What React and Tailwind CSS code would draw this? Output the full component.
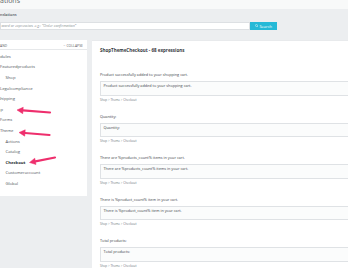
import React from 'react';

const tree = [
  { name: 'Modules', x: '-ml-[6px]' },
  { name: 'Featuredproducts', x: 'ml-0' },
  { name: 'Shop', x: 'ml-[5.5px]' },
  { name: 'Legalcompliance', x: 'ml-0' },
  { name: 'Shipping', x: '-ml-[2px]' },
  { name: 'Shop', x: '-ml-[7px]' },
  { name: 'Forms', x: 'ml-0' },
  { name: 'Theme', x: 'ml-0' },
  { name: 'Actions', x: 'ml-[5.5px]' },
  { name: 'Catalog', x: 'ml-[5.5px]' },
  { name: 'Checkout', x: 'ml-[5.5px]', active: true },
  { name: 'Customeraccount', x: 'ml-[5.5px]' },
  { name: 'Global', x: 'ml-[5.5px]' },
];

const expressions = [
  'Product successfully added to your shopping cart.',
  'Quantity:',
  'There are %products_count% items in your cart.',
  'There is %product_count% item in your cart.',
  'Total products:',
];

// annotation arrows, coords relative to the page
const arrows = [
  { tip: [17, 110], tail: [50, 112.5] },
  { tip: [19, 132.5], tail: [49.5, 135] },
  { tip: [29.5, 162.5], tail: [55, 157.5] },
];

function Arrow({ tip, tail }) {
  const dx = tip[0] - tail[0];
  const dy = tip[1] - tail[1];
  const len = Math.hypot(dx, dy);
  const ux = dx / len, uy = dy / len;
  const bx = tip[0] - ux * 6, by = tip[1] - uy * 6;
  const nx = -uy * 3.2, ny = ux * 3.2;
  return (
    <g fill="#ee2f6d" stroke="#ee2f6d">
      <line x1={tail[0]} y1={tail[1]} x2={bx} y2={by} strokeWidth="2.2" strokeLinecap="round" />
      <polygon points={`${tip[0]},${tip[1]} ${bx + nx},${by + ny} ${bx - nx},${by - ny}`} strokeWidth="0.5" strokeLinejoin="round" />
    </g>
  );
}

export default function App() {
  return (
    <div className="relative w-[348px] h-[268px] overflow-hidden bg-[#eceef0] font-['Open_Sans',sans-serif] text-[#363a41]">
      <div className="h-[9px] overflow-hidden bg-[#f8f9f9]">
        <div className="-ml-[20px] -mt-[3px] text-[7px] leading-[8px] text-[#5f6468] whitespace-nowrap">Translations</div>
      </div>

      <div className="pt-[3px] h-[31px]">
        <div className="-ml-[6px] text-[3.8px] leading-[6px] font-semibold text-[#4a4f55] whitespace-nowrap">Translations</div>
        <div className="flex mt-[4px] h-[8px]">
          <div className="w-[250px] h-[7.5px] bg-white border border-[#dde0e3] flex items-center px-[0.5px] overflow-hidden">
            <span className="text-[3.7px] leading-[5px] italic text-[#8a9196] whitespace-nowrap">word or expression, e.g.: “Order confirmation”</span>
          </div>
          <div className="w-[27px] h-[8px] bg-[#25b9d7] flex items-center justify-center gap-[1px] text-white text-[4px] leading-[5px]">
            <svg width="3.5" height="3.5" viewBox="0 0 24 24" fill="none" stroke="white" strokeWidth="3">
              <circle cx="10" cy="10" r="7" />
              <line x1="15" y1="15" x2="21" y2="21" />
            </svg>
            <span>Search</span>
          </div>
        </div>
      </div>

      <div className="flex gap-[5px] items-start w-[420px]">
        <div className="w-[87px] shrink-0 bg-white pb-[7px] overflow-hidden">
          <div className="pt-[3px] border-b border-[#e6e8ea] flex justify-between items-center h-[10px] pr-[4px]">
            <span className="-ml-[6px] text-[3.3px] leading-[6px] text-[#555a60] tracking-[0.1px]">EXPAND</span>
            <span className="text-[3.3px] leading-[6px] text-[#555a60] tracking-[0.1px]">− COLLAPSE</span>
          </div>
          <div className="pt-[1.7px]">
            {tree.map((item, i) => (
              <div key={i} className={`h-[10.6px] flex items-center whitespace-nowrap text-[4.2px] ${item.x} ${item.active ? 'font-bold text-[#25292e]' : 'text-[#50555b]'}`}>
                {item.name}
              </div>
            ))}
          </div>
        </div>

        <div className="w-[320px] shrink-0 bg-white border-t border-[#e8eaec] pl-[8px] h-[240px]">
          <div className="pt-[5px] text-[4.5px] leading-[8px] font-bold text-[#363a41] whitespace-nowrap">
            ShopThemeCheckout - 68 expressions
          </div>
          <div className="mt-[18px] flex flex-col gap-[11px]">
            {expressions.map((text, i) => (
              <div key={i}>
                <div className="text-[3.8px] leading-[6px] text-[#40454b] whitespace-nowrap">{text}</div>
                <div className="mt-[3px] h-[14.5px] bg-[#fbfcfc] border border-[#dfe2e5] px-[2.5px] pt-[1px] text-[3.8px] leading-[6px] text-[#40454b] whitespace-nowrap">
                  {text}
                </div>
                <div className="mt-[1px] text-[3px] leading-[6px] text-[#6c757d] whitespace-nowrap">Shop &gt; Theme &gt; Checkout</div>
              </div>
            ))}
          </div>
        </div>
      </div>

      <svg className="absolute left-0 top-0 pointer-events-none" width="60" height="170" viewBox="0 0 60 170">
        {arrows.map((a, i) => <Arrow key={i} {...a} />)}
      </svg>
    </div>
  );
}
